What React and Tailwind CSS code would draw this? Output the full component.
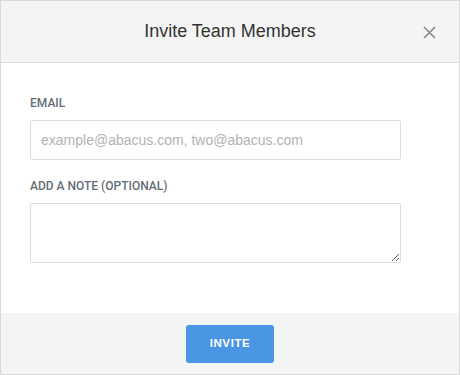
import React from 'react';

const Label = ({ children }) => (
  <label className="block text-[12px] leading-4 font-medium uppercase text-[#646d75] [font-family:Roboto,'Liberation_Sans',sans-serif]">
    {children}
  </label>
);

const App = () => {
  return (
    <div className="w-[460px] h-[375px] flex flex-col border border-[#d9d9d9] bg-white [font-family:'Liberation_Sans',Arial,sans-serif]">
      <div className="h-[62px] shrink-0 flex items-center justify-center relative bg-[#f4f4f4] border-b border-[#dcdcdc]">
        <h1 className="text-[18px] text-[#333]">Invite Team Members</h1>
        <button className="absolute right-[23px] top-[24px] w-[14px] h-[14px] flex items-center justify-center text-[#888]">
          <svg width="13" height="13" viewBox="0 0 13 13" fill="none" stroke="currentColor" strokeWidth="1.6">
            <path d="M1 1L12 12M12 1L1 12" />
          </svg>
        </button>
      </div>

      <div className="flex-1 px-[29px] pt-[32px]">
        <Label>Email</Label>
        <input
          className="mt-[9px] w-[371px] h-[40px] px-[10px] rounded-[2px] border border-[#dcdcdc] text-[14px] text-[#333] placeholder:text-[#b3b3b3] outline-none"
          placeholder="example@abacus.com, two@abacus.com"
        />
        <div className="mt-[18px]">
          <Label>Add a note (optional)</Label>
        </div>
        <textarea className="block mt-[9px] w-[371px] h-[60px] px-[10px] py-2 rounded-[2px] border border-[#dcdcdc] text-[14px] outline-none" />
      </div>

      <div className="h-[61px] shrink-0 flex items-center justify-center bg-[#f4f4f4]">
        <button className="w-[88px] h-[38px] rounded-[3px] bg-[#4a96e4] text-white text-[11.5px] font-bold tracking-[0.6px]">
          INVITE
        </button>
      </div>
    </div>
  );
};

export default App;
